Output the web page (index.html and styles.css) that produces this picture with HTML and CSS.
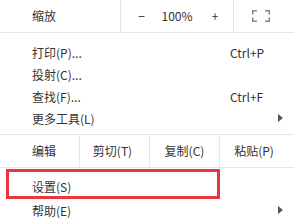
FILE: index.html
```html
<!DOCTYPE html>
<html lang="zh-CN">
<head>
    <meta charset="UTF-8">
    <meta name="viewport" content="width=device-width, initial-scale=1.0">
    <title>菜单</title>
    <link rel="stylesheet" href="styles.css">
</head>
<body>
    <div class="menu">
        <div class="zoom-row">
            <div class="zoom-label">缩放</div>
            <div class="zoom-controls">
                <span class="zoom-btn">−</span>
                <span class="zoom-value">100%</span>
                <span class="zoom-plus">+</span>
            </div>
            <div class="zoom-full">
                <svg width="18" height="12" viewBox="0 0 18 12">
                    <path d="M0.75 4.5V0.75H5 M13 0.75H17.25V4.5 M17.25 7.5V11.25H13 M5 11.25H0.75V7.5" fill="none" stroke="#8a8a8a" stroke-width="1.5"/>
                </svg>
            </div>
        </div>

        <div class="group">
            <div class="item"><span class="label">打印(P)...</span><span class="shortcut">Ctrl+P</span></div>
            <div class="item"><span class="label">投射(C)...</span></div>
            <div class="item"><span class="label">查找(F)...</span><span class="shortcut">Ctrl+F</span></div>
            <div class="item"><span class="label">更多工具(L)</span><span class="arrow"></span></div>
        </div>

        <div class="edit-row">
            <div class="edit-label">编辑</div>
            <div class="edit-cell cut">剪切(T)</div>
            <div class="edit-cell copy">复制(C)</div>
            <div class="edit-cell paste">粘贴(P)</div>
        </div>

        <div class="group last">
            <div class="item tall"><span class="label">设置(S)</span></div>
            <div class="item tall"><span class="label">帮助(E)</span><span class="arrow"></span></div>
        </div>

        <div class="highlight"></div>
    </div>
</body>
</html>
```

FILE: styles.css
```css
* {
    margin: 0;
    padding: 0;
    box-sizing: border-box;
}

body {
    background-color: #fff;
    color: #333;
    font-family: "Noto Sans CJK SC", "Noto Sans", sans-serif;
    font-size: 12px;
}

.menu {
    position: relative;
    width: 294px;
    height: 223px;
    overflow: hidden;
}

.zoom-row {
    display: flex;
    height: 33px;
    border-bottom: 1px solid #e6e6e6;
}

.zoom-label {
    width: 120px;
    padding-left: 32px;
    line-height: 32px;
}

.zoom-controls {
    width: 114px;
    display: flex;
    padding-left: 9px;
    border-left: 1px solid #e6e6e6;
    border-right: 1px solid #e6e6e6;
    line-height: 32px;
}

.zoom-btn {
    width: 23px;
    text-align: center;
}

.zoom-value {
    width: 48px;
    text-align: center;
}

.zoom-plus {
    width: 28px;
    text-align: center;
}

.zoom-full {
    flex: 1;
    display: flex;
    align-items: center;
    padding-left: 18px;
}

.group {
    padding: 8px 0 5px;
    border-bottom: 1px solid #e6e6e6;
}

.group.last {
    padding-top: 6px;
    border-bottom: none;
}

.item {
    display: flex;
    align-items: center;
    height: 22px;
    padding-left: 32px;
    position: relative;
}

.item.tall {
    height: 24px;
}

.label {
    width: 198px;
}

.shortcut {
    color: #333;
}

.arrow {
    position: absolute;
    right: 11px;
    top: 50%;
    margin-top: -4px;
    width: 0;
    height: 0;
    border-top: 4px solid transparent;
    border-bottom: 4px solid transparent;
    border-left: 5px solid #555;
}

.edit-row {
    display: flex;
    height: 33px;
    border-bottom: 1px solid #e6e6e6;
    line-height: 32px;
}

.edit-label {
    width: 80px;
    padding-left: 32px;
    border-right: 1px solid #e6e6e6;
}

.edit-cell {
    width: 70px;
    text-align: center;
    border-right: 1px solid #e6e6e6;
}

.edit-cell.cut {
    padding-right: 4px;
}

.edit-cell.paste {
    flex: 1;
    border-right: none;
    padding-right: 6px;
}

.highlight {
    position: absolute;
    left: 6px;
    top: 169px;
    width: 214px;
    height: 30px;
    border: 3px solid #e5393f;
}
```
